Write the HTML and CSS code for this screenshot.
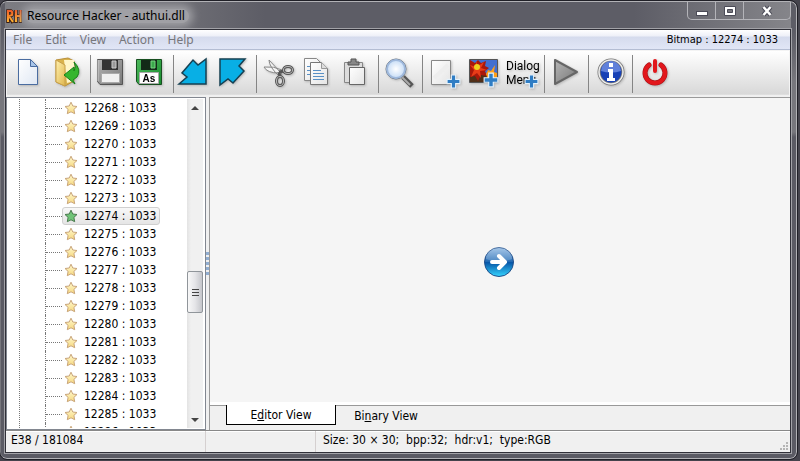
FILE: index.html
```html
<!DOCTYPE html>
<html lang="en">
<head>
<meta charset="utf-8">
<title>Resource Hacker - authui.dll</title>
<link rel="stylesheet" href="styles.css">
</head>
<body>
<svg class="defs" aria-hidden="true">
  <defs>
    <linearGradient id="gold" x2="0" y2="1"><stop offset="0" stop-color="#fffad0"/><stop offset="1" stop-color="#f6d77e"/></linearGradient>
    <linearGradient id="page" x2="1" y2="1"><stop offset="0" stop-color="#fff"/><stop offset="1" stop-color="#dfe7f3"/></linearGradient>
    <linearGradient id="paper" x2="1" y2="1"><stop offset="0" stop-color="#fff"/><stop offset="1" stop-color="#e4e4e4"/></linearGradient>
    <linearGradient id="grey" x2="1" y2="1"><stop offset="0" stop-color="#b5b5b5"/><stop offset="1" stop-color="#777"/></linearGradient>
    <linearGradient id="green" x2="1" y2="1"><stop offset="0" stop-color="#4db85b"/><stop offset="1" stop-color="#168c2d"/></linearGradient>
    <linearGradient id="folder" x2="1" y2="1"><stop offset="0" stop-color="#fff0ad"/><stop offset="1" stop-color="#dfb64e"/></linearGradient>
    <linearGradient id="fire" gradientUnits="userSpaceOnUse" x1="0" y1="2" x2="0" y2="14"><stop offset="0" stop-color="#ef5a28"/><stop offset="1" stop-color="#ffb632"/></linearGradient>
    <linearGradient id="orb" x2="0" y2="1"><stop offset="0" stop-color="#90b9e4"/><stop offset=".48" stop-color="#246bb4"/><stop offset=".52" stop-color="#0756a8"/><stop offset="1" stop-color="#35d5ff"/></linearGradient>
    <radialGradient id="lens"><stop offset="0" stop-color="#fff"/><stop offset="1" stop-color="#c1d9f5"/></radialGradient>
    <symbol id="star" viewBox="0 0 14 14"><path d="M7 1.200 8.800 5l4.200.5-3.100 2.900.8 4.300L7 10.800l-3.700 1.900.8-4.300L1 5.500 5.200 5Z" stroke-linejoin="round"/></symbol>
    <symbol id="plus" viewBox="0 0 14 14"><path d="M5 1h4v4h4v4H9v4H5V9H1V5h4Z" fill="#2f7dc4" stroke="#e5f2fc"/></symbol>
  </defs>
</svg>
<div class="window">
  <header class="titlebar">
    <svg class="app-icon" viewBox="0 0 16 16" aria-hidden="true"><g fill="none" stroke="#3a1c12" stroke-width="3.500"><path d="M2 15V3h3q2 1 1 4L3 8l4 7M10 2v13M14.500 2v13M10 8h4"/></g><g fill="none" stroke="url(#fire)" stroke-width="2"><path d="M2 14V3h3q2 1 1 4L3 8l4 6M10 2v12M14.500 2v12M10 8h4"/></g></svg>
    <h1 class="title">Resource Hacker - authui.dll</h1>
    <div class="window-buttons">
      <button class="window-button" aria-label="Minimize"><svg viewBox="0 0 14 12"><rect x="1.500" y="6.500" width="11" height="4" fill="#fff" stroke="#4b4b57"/></svg></button>
      <button class="window-button" aria-label="Maximize"><svg viewBox="0 0 14 12"><path d="M1.500 1.500h11v9h-11Zm3 3v3h5v-3Z" fill="#fff" fill-rule="evenodd" stroke="#4b4b57"/></svg></button>
      <button class="window-button close" aria-label="Close"><svg viewBox="0 0 14 12"><path d="m3.500 2 7 8m0-8-7 8" stroke="#4b4b57" stroke-width="4.500"/><path d="m3.500 2 7 8m0-8-7 8" stroke="#fff" stroke-width="2.500"/></svg></button>
    </div>
  </header>
  <div class="client">
    <nav class="menubar">
      <button>File</button><button>Edit</button><button>View</button><button>Action</button><button>Help</button>
      <span class="resource">Bitmap : 12274 : 1033</span>
    </nav>
    <div class="toolbar">
      <div class="group">
        <button aria-label="New"><svg viewBox="0 0 39 36"><path d="M8.500 4.500h12l7 7v18h-19Z" fill="url(#page)" stroke="#4a6ca0"/><path d="M20.500 4.500v7h7Z" fill="#a8c5e9" stroke="#4a6ca0"/></svg></button>
        <button aria-label="Open"><svg viewBox="0 0 39 36"><path d="m7 5 12-2 6 3v20l-9 5-9-4Z" fill="#d9b24c" stroke="#b9903a"/><path d="M15 5h10v21l-7 2Z" fill="#fff5c9"/><path d="m7 5 9 5v21l-9-4Z" fill="url(#folder)" stroke="#c8a04b"/><path d="M25 7q8 8 3 15l-4 3 2 4-11-9 10-8v4q3-4 0-9Z" fill="#36b52f" stroke="#188018"/></svg></button>
      </div>
      <div class="group">
        <button aria-label="Save"><svg viewBox="0 0 39 36"><path d="M4.500 4.500h25v25H7l-2.500-3Z" fill="url(#grey)" stroke="#555"/><path d="M9 5h16v10H9Z" fill="#333"/><path d="M19 6h4v7h-4Z" fill="#999" stroke="#ccc"/><path d="M8.500 18.500h18v9h-18Z" fill="#f0f0f0" stroke="#aaa"/><path d="M5 5v21" stroke="#ccc"/></svg></button>
        <button aria-label="Save as"><svg viewBox="0 0 39 36"><path d="M4.500 4.500h25v25H7l-2.500-3Z" fill="url(#green)" stroke="#174f20"/><path d="M9 5h16v10H9Z" fill="#132b18"/><path d="M19 6h4v7h-4Z" fill="#3aa84a" stroke="#76d482"/><path d="M7.500 17.500h19v11h-19Z" fill="#fff" stroke="#aaa"/><text x="17" y="27" class="as-label">As</text></svg></button>
      </div>
      <div class="group">
        <button aria-label="Previous"><svg viewBox="0 0 39 36"><path d="m3 29 8-7-5-4L17 5l5 5 8-6v25Z" class="cyan"/></svg></button>
        <button aria-label="Next"><svg viewBox="0 0 39 36"><path d="M5 4h25l-6 7 5 5-11 12-5-4-8 6Z" class="cyan"/></svg></button>
      </div>
      <div class="group">
        <button aria-label="Cut"><svg viewBox="0 0 39 36"><path d="m10 5 13 14-2 3Q10 12 10 5ZM5 12q10-1 18 3l-3 3Q8 18 5 12Z" fill="#f4f4f4" stroke="#888"/><g fill="none" stroke="#555" stroke-width="3"><ellipse cx="29" cy="15" rx="4.500" ry="3.500"/><ellipse cx="21" cy="26" rx="3.500" ry="4.500"/><path d="m20 17 5-1M20 17l1 5"/></g><g fill="none" stroke="#bbb"><ellipse cx="29" cy="15" rx="4.500" ry="3.500"/><ellipse cx="21" cy="26" rx="3.500" ry="4.500"/></g></svg></button>
        <button aria-label="Copy"><svg viewBox="0 0 39 36"><path d="M6.500 3.500h12l4 4v18h-16Z" fill="url(#paper)" stroke="#888"/><path d="M9 11.500h5m-5 4h5m-5 4h5" stroke="#5990c5"/><path d="M12.500 7.500h11l6 6v16h-17Z" fill="url(#paper)" stroke="#777"/><path d="M23.500 7.500v6h6" fill="#ddd" stroke="#999"/><path d="M15 15.500h8m-8 3h11m-11 3h11m-11 3h11" stroke="#5990c5"/></svg></button>
        <button aria-label="Paste"><svg viewBox="0 0 39 36"><path d="M7.500 7.500h18v20h-18Z" fill="#ddd" stroke="#888"/><path d="M11 10V7h3V4h5v3h3v3Z" fill="#888" stroke="#555"/><path d="M12.500 12.500h15v17h-15Z" fill="url(#paper)" stroke="#666"/></svg></button>
      </div>
      <div class="group">
        <button aria-label="Find"><svg viewBox="0 0 39 36"><path d="m22 22 9 9" stroke="#555" stroke-width="5"/><path d="m21 22 8 8" stroke="#aaa" stroke-width="2"/><circle cx="15" cy="14" r="10" fill="url(#lens)" stroke="#6d7782"/><circle cx="15" cy="14" r="9" fill="none" stroke="#9eb8dc" stroke-width="2"/></svg></button>
      </div>
      <div class="group">
        <button aria-label="Add resource"><svg viewBox="0 0 39 36"><path d="M6.500 5.500h19v24h-19Z" fill="url(#paper)" stroke="#888"/><path d="m9 23 14-13" stroke="#eee" stroke-width="4"/><use href="#plus" x="21" y="19" width="15" height="15"/></svg></button>
        <button aria-label="Add image"><svg viewBox="0 0 39 36"><path d="M5.500 4.500h28v23h-28Z" fill="#426fd0" stroke="#555"/><path d="M6 20h27v7H6Z" fill="#503019"/><path d="m14 5 3 3 5-2-1 5 4 2-4 3 2 5-6-1-3 6-3-5-5 1V5l5 3Z" fill="#a9180b"/><path d="m12 6 2 5 6-4-3 6 6 2-7 1 1 7-4-5-6 4 3-7-4-5 6 2Z" fill="#e93c18"/><circle cx="13" cy="12" r="3" fill="#efd01c"/><path d="m24 15 3 1 4-6-1 7 3 1v7h-9l-2-6Z" fill="#ff9f16"/><use href="#plus" x="19" y="17" width="16" height="16"/></svg></button>
        <button aria-label="Add dialog or menu"><svg viewBox="0 0 39 36"><text x="3" y="15" class="tool-label">Dialog</text><text x="3" y="29" class="tool-label">Menu</text><use href="#plus" x="21" y="19" width="15" height="15"/></svg></button>
      </div>
      <div class="group">
        <button aria-label="Run"><svg viewBox="0 0 39 36"><path d="M8 5v24l22-12Z" fill="url(#grey)" stroke="#666" stroke-width="2" stroke-linejoin="round"/></svg></button>
      </div>
      <div class="group">
        <button aria-label="About"><svg viewBox="0 0 39 36"><circle cx="20" cy="17" r="12" fill="#1740b5" stroke="#777" stroke-width="3"/><circle cx="20" cy="17" r="12" fill="none" stroke="#eee" stroke-width="1.500"/><path d="M10 16a10 10 0 0 1 20 0Q20 19 10 16" fill="#6080da"/><path d="M18 8h4v4h-4Zm-1 6h5v9h2v3h-8v-3h2v-6h-1Z" fill="#fff"/></svg></button>
      </div>
      <div class="group">
        <button aria-label="Exit"><svg viewBox="0 0 39 36"><path d="M14 10a10 10 0 1 0 12 0" fill="none" stroke="#a71217" stroke-width="5" stroke-linecap="round"/><path d="M14 10a10 10 0 1 0 12 0M20 6v10" fill="none" stroke="#e2171c" stroke-width="4" stroke-linecap="round"/></svg></button>
      </div>
    </div>
    <main class="workspace">
      <section class="tree-pane" aria-label="Resources">
        <ul class="tree" id="tree"></ul>
        <div class="scrollbar">
          <svg class="arrow" viewBox="0 0 16 18"><path d="m4 11 4-4 4 4Z"/></svg>
          <div class="thumb"><i></i><i></i><i></i></div>
          <svg class="arrow" viewBox="0 0 16 18"><path d="m4 8 4 4 4-4Z"/></svg>
        </div>
      </section>
      <div class="splitter"><span class="grip"></span></div>
      <section class="editor">
        <div class="canvas">
          <svg class="orb" viewBox="0 0 32 32" role="img" aria-label="Arrow button"><circle cx="16" cy="16" r="14.500" fill="url(#orb)" stroke="#214f8b"/><path d="M3 13a13 13 0 0 1 26 0Q16 18 3 13" fill="#fff" opacity=".2"/><path d="M9 16h13m-6-6 6 6-6 6" fill="none" stroke="#fff" stroke-width="4" stroke-linecap="round" stroke-linejoin="round"/></svg>
        </div>
        <div class="tabs" role="tablist">
          <button class="tab active" role="tab" aria-selected="true">E<u>d</u>itor View</button>
          <button class="tab" role="tab">Bi<u>n</u>ary View</button>
        </div>
      </section>
    </main>
    <footer class="statusbar">
      <span class="cell position">E38 / 181084</span><span class="cell spare"></span><span class="cell info">Size: 30 × 30;&nbsp; bpp:32;&nbsp; hdr:v1;&nbsp; type:RGB</span>
      <svg class="resize" viewBox="0 0 12 12" aria-hidden="true"><path d="M8 2h2v2H8ZM5 5h2v2H5Zm3 0h2v2H8ZM2 8h2v2H2Zm3 0h2v2H5Zm3 0h2v2H8Z" fill="#b5b5b5"/></svg>
    </footer>
  </div>
</div>
<script src="tree.js"></script>
</body>
</html>
```
FILE: tree.js
```js
const tree = document.getElementById('tree');
for (let id = 12268; id <= 12286; id++) {
  const row = document.createElement('li');
  row.className = id === 12274 ? 'row selected' : 'row';
  row.innerHTML = '<span class="branch"></span><span class="node"><svg class="star"><use href="#star"/></svg>' + id + ' : 1033</span>';
  tree.append(row);
}
```
FILE: styles.css
```css
* { box-sizing: border-box; }
body {
  margin: 0;
  height: 100vh;
  padding: 1px 3px 2px 0;
  overflow: hidden;
  background: #45444d;
  font: 12px/18px "DejaVu Sans Condensed", "DejaVu Sans", sans-serif;
  color: #000;
}
button { margin: 0; padding: 0; border: 0; background: none; font: inherit; color: inherit; }
svg { display: block; }
.defs { position: absolute; width: 0; height: 0; }
.window {
  display: flex;
  flex-direction: column;
  height: 100%;
  padding: 0 5px 5px 4px;
  border: 1px solid #b2b2b6;
  border-left-color: #77777d;
  border-radius: 7px;
  outline: 1px solid #202027;
  background: linear-gradient(#5d5d66, #5d5d66 30px, #77777d 80px, #77777d 130px, #5b5b64 135px);
}
.titlebar {
  flex: none;
  display: flex;
  height: 27px;
  align-items: center;
  gap: 4px;
  background: linear-gradient(90deg, #7c7c82, #6d6d74 180px, #5d5d66 260px, #5d5d66 80%, #85858a);
}
.app-icon { width: 16px; height: 16px; margin-left: 1px; }
.title {
  margin: 0;
  padding: 0 4px 0 1px;
  border-radius: 12px;
  background: #a0a0a5;
  box-shadow: 0 0 8px 4px #a0a0a5;
  font: 12px/14px "Noto Sans", "Open Sans", sans-serif;
  white-space: nowrap;
}
.window-buttons { display: flex; align-self: flex-start; margin: 0 0 0 auto; border: 1px solid #b4b4b9; border-top: 0; border-radius: 0 0 5px 5px; }
.window-button { display: flex; justify-content: center; align-items: center; width: 28px; height: 17px; border-right: 1px solid #b4b4b9; }
.window-button svg { width: 14px; height: 12px; }
.window-button.close { width: 46px; border: 0; }
.client { flex: 1; min-height: 0; display: flex; flex-direction: column; border: 1px solid #303038; outline: 1px solid #a3a3a8; background: #f0f0f0; }
.menubar {
  flex: none;
  display: flex;
  height: 20px;
  padding: 0 12px 0 7px;
  gap: 13px;
  border-bottom: 1px solid #b4bdd3;
  background: linear-gradient(#fff, #eef0f8 6px, #d5dbed 7px, #e1e6f6);
  font: 12px/20px "Noto Sans", "Open Sans", sans-serif;
  color: #77777c;
}
.resource { margin-left: auto; color: #000; font: 11px/20px "DejaVu Sans Condensed", "DejaVu Sans", sans-serif; }
.toolbar {
  flex: none;
  display: flex;
  height: 47px;
  padding: 4px 3px;
  border: solid #f4f4f4;
  border-width: 1px 1px 0;
  background: linear-gradient(#fff, #d8d8d8 94%, #f0f0f0 96%);
}
.group { display: flex; padding: 0 2px; border-right: 1px solid #858585; height: 38px; }
.group:first-child { padding-left: 0; }
.group:last-child { border: 0; }
.toolbar button { width: 39px; height: 36px; }
.toolbar svg { width: 39px; height: 36px; filter: drop-shadow(1px 1px 1px #9999); }
.cyan { fill: #08afe5; stroke: #164052; stroke-width: 1.5; }
.as-label { font: bold 10px "Liberation Sans", sans-serif; text-anchor: middle; }
.tool-label { font: 12px Roboto, "Liberation Sans", sans-serif; }
.workspace { flex: 1; min-height: 0; display: flex; }
.tree-pane { display: flex; width: 200px; border: 1px solid #828790; padding: 1px 2px 1px 0; background: #fff; overflow: hidden; }
.tree { flex: 1; margin: 0 0 0 12px; padding: 0; list-style: none; overflow: hidden; border-left: 1px dotted #777; }
.row { display: flex; align-items: center; height: 18px; margin-left: 25px; border-left: 1px dotted #777; }
.branch { width: 16px; border-top: 1px dotted #777; }
.node { display: flex; align-items: center; gap: 6px; height: 18px; padding: 0 3px 0 1px; border: 1px solid transparent; border-radius: 3px; white-space: nowrap; }
.selected .node { border-color: #d0d0d0; background: linear-gradient(#f8f8f8, #e5e5e5); }
.star { width: 14px; height: 14px; fill: url(#gold); stroke: #c9a57a; }
.selected .star { fill: #6fc477; stroke: #4c7a4f; }
.scrollbar { display: flex; flex-direction: column; width: 16px; background: linear-gradient(90deg, #e3e3e3, #f0f0f0 4px); }
.arrow { width: 16px; height: 18px; fill: #444; }
.thumb { display: flex; flex-direction: column; align-items: center; justify-content: center; gap: 2px; height: 42px; margin: auto 0 97px; border: 1px solid #90959a; border-radius: 2px; background: linear-gradient(90deg, #f8f8f8, #e5e5e8 50%, #c5c6cb); }
.thumb i { width: 7px; height: 1px; background: #444; }
.splitter { display: flex; align-items: center; width: 3px; background: #f0f0f0; }
.grip { width: 3px; height: 24px; background: repeating-linear-gradient(#91add0 0 3px, #f0f0f0 3px 5px); }
.editor { flex: 1; display: flex; flex-direction: column; border-top: 1px solid #9a9a9a; border-left: 1px solid #9a9a9a; }
.canvas { flex: 1; display: grid; place-items: center; padding: 24px 2px 0 0; border-bottom: 3px solid #fff; background: #f5f5f5; }
.orb { width: 32px; height: 32px; }
.tabs { display: flex; height: 25px; padding-left: 16px; border-top: 1px solid #999; }
.tab { width: 100px; height: 20px; line-height: 20px; }
.tab.active { width: 110px; margin-top: -1px; border: 1px solid #000; border-top: 0; background: #fff; }
.statusbar { flex: none; display: flex; height: 22px; border-top: 1px solid #888; box-shadow: inset 0 1px #fff; line-height: 18px; }
.cell { padding-left: 5px; border-right: 1px solid #d5d0d0; margin: 0; }
.position { width: 200px; }
.spare { width: 110px; }
.info { flex: 1; padding-left: 7px; border: 0; white-space: nowrap; }
.resize { align-self: flex-end; width: 12px; height: 12px; }
```
